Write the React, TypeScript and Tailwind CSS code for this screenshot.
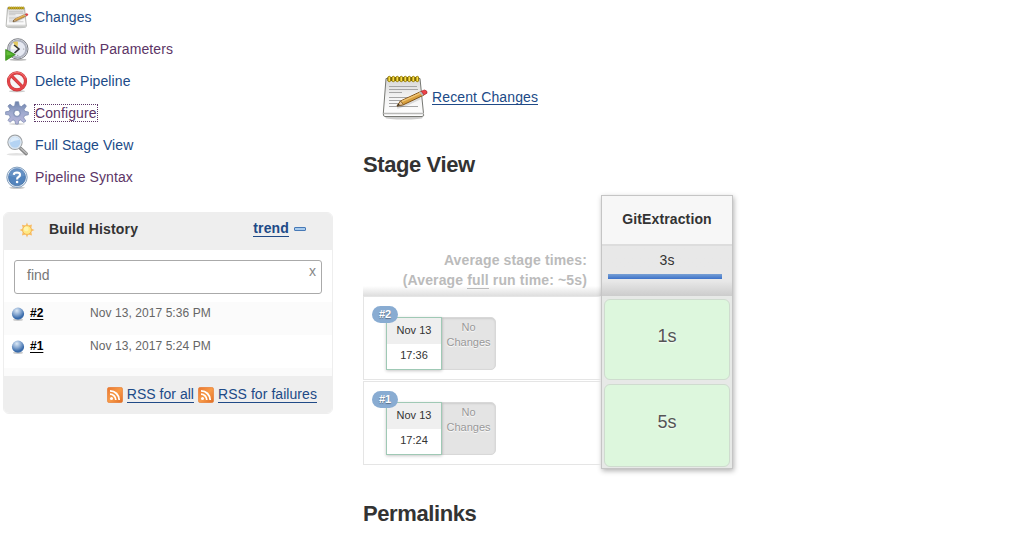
import React from 'react';

type IconProps = { className?: string };

const Notepad = ({ className = '', id }: IconProps & { id: string }) => (
  <svg viewBox="0 0 48 48" className={className}>
    <defs>
      <linearGradient id={id} x1="0" y1="0" x2="0" y2="1">
        <stop offset="0" stopColor="#d6d6d6" />
        <stop offset="0.5" stopColor="#f4f4f4" />
        <stop offset="1" stopColor="#ffffff" />
      </linearGradient>
    </defs>
    <ellipse cx="23" cy="44.8" rx="19" ry="1.8" fill="#000" opacity="0.2" />
    <path d="M5 5.5H39L42.5 40.5Q43.5 43.5 41 43.5H4Q2 43.5 2.3 40.5Z" fill={`url(#${id})`} stroke="#777873" />
    <path d="M3 40.5H43" stroke="#b9b9b7" strokeWidth="1.5" />
    <path d="M8 13.5H36M8 16.5H37M8 19.5H21M8 24.5H29M8 27.5H28M8 30.5H19M8 33.5H37" stroke="#a5a5a5" />
    <path d="M6.5 6H38" stroke="#6c5c12" strokeWidth="4" />
    {[8, 12, 16, 20, 24, 28, 32, 36].map((x) => (
      <rect key={x} x={x - 1} y="3.3" width="2.6" height="5.4" rx="1.3" fill="#f8dc45" stroke="#8f7600" strokeWidth="0.9" />
    ))}
    <path d="M16 34.5Q28 31 39 25" stroke="#000" strokeWidth="3" opacity="0.12" fill="none" />
    <path d="M16 33L19.5 28L40 18.5L43 22L22.5 31.7Z" fill="#d8a03e" stroke="#805219" />
    <path d="M20.5 28.7L40 19.8" stroke="#f0c77a" strokeWidth="1.3" />
    <path d="M16 33L19.5 28L22.5 31.7Z" fill="#e9c89b" stroke="#76501c" strokeWidth="0.7" />
    <path d="M16 33L17.5 30.7L18.8 32Z" fill="#222" />
    <path d="M38 19.3L40.3 18.2L43.3 21.7L41 22.8Z" fill="#bbb" />
    <path d="M40.3 18.2L43.5 17Q46.6 17.5 46 20.2L43 21.9Z" fill="#ee4248" stroke="#a8282c" strokeWidth="0.7" />
  </svg>
);

const BuildIcon = ({ className }: IconProps) => (
  <svg viewBox="0 0 24 24" className={className}>
    <ellipse cx="13" cy="22.8" rx="8.5" ry="1" fill="#bbb" />
    <circle cx="12.8" cy="11.9" r="10.2" fill="#f5f6f8" stroke="#7b7e84" strokeWidth="1" />
    <circle cx="12.8" cy="11.9" r="8.5" fill="#e6e9f2" stroke="#aeb2bf" strokeWidth="2" />
    <path d="M6 12A7 7 0 0 1 12.8 5V12Z" fill="#f8f8ef" />
    <path d="M12.5 12L8 5.2Q10.5 3.9 13 4.7Z" fill="#e3c95f" />
    <path d="M9 8L14 12L9.5 16" stroke="#343434" strokeWidth="1.6" fill="none" />
    <circle cx="18.7" cy="12" r=".6" fill="#888" /><circle cx="12.8" cy="18.3" r=".6" fill="#888" />
    <path d="M.7 12.5L10.3 17.6L.7 23.4Z" fill="#48a724" stroke="#38891c" strokeWidth=".8" />
    <path d="M1.5 14L8 17.4L1.5 18.5Z" fill="#74c947" opacity=".65" />
  </svg>
);

const DeleteIcon = ({ className }: IconProps) => (
  <svg viewBox="0 0 24 24" className={className}>
    <ellipse cx="12" cy="22.3" rx="8" ry="1" fill="#ccc" />
    <circle cx="12" cy="12.3" r="8.5" fill="#f7f7f7" stroke="#c53b3e" strokeWidth="3.2" />
    <path d="M6 6.3L18 18.3" stroke="#c53b3e" strokeWidth="3.3" />
    <circle cx="12" cy="12.3" r="8.5" fill="none" stroke="#e54549" strokeWidth="2.1" />
    <path d="M6 6.3L18 18.3" stroke="#e54549" strokeWidth="2.1" />
    <path d="M3.5 9.3Q6 3.3 12 3.3T20.5 9.3" stroke="#f48583" strokeWidth=".8" fill="none" />
  </svg>
);

const GearIcon = ({ className }: IconProps) => (
  <svg viewBox="0 0 24 24" className={className}>
    <defs>
      <linearGradient id="gear" x2="0" y2="1"><stop stopColor="#6d83ac" /><stop offset=".5" stopColor="#a1abd0" /><stop offset="1" stopColor="#b9b5d9" /></linearGradient>
    </defs>
    <ellipse cx="12" cy="23" rx="8" ry=".8" fill="#ccc" />
    <path fill="url(#gear)" stroke="#7686ae" strokeWidth=".7" fillRule="evenodd" strokeLinejoin="round" d="M10.4 .8H13.6L14.3 4.7L16.4 5.6L19.6 3.1L21.4 5.1L19.1 8.4L19.9 10.3L23.4 11V13.8L19.7 14.5L18.7 16.7L20.9 20L18.7 21.5L15.6 19L13.7 19.7L13.2 23.1H10.7L9.8 19.7L8 18.9L4.9 21.3L3 19.3L5.2 16.2L4.2 14L.6 13.5V10.8L4.2 10.2L5.1 8.3L2.9 5.1L5 3.2L8 5.6L9.7 4.7ZM12 9.3A3 3 0 1 0 12 15.3A3 3 0 1 0 12 9.3Z" />
    <circle cx="12" cy="12.3" r="3.6" fill="none" stroke="#7787b0" opacity=".5" />
  </svg>
);

const SearchIcon = ({ className }: IconProps) => (
  <svg viewBox="0 0 24 24" className={className}>
    <ellipse cx="11.5" cy="21.3" rx="10" ry="1.3" fill="#e2e2e2" />
    <path d="M15.4 15.2L21.2 20.7" stroke="#858585" strokeWidth="3.4" strokeLinecap="round" />
    <path d="M16 15.4L21.3 20.2" stroke="#bcbcbc" strokeWidth="1.4" strokeLinecap="round" />
    <circle cx="10" cy="9.3" r="7.1" fill="#b4d3f3" stroke="#a1a4a6" strokeWidth="1.2" />
    <circle cx="10" cy="9.3" r="6" fill="none" stroke="#e2e8ee" strokeWidth="1.1" />
    <path d="M5.2 9.6Q4.7 4.4 10.2 4Q13.2 4.1 14.4 6.9Q9.7 6.8 5.2 9.6Z" fill="#dcecfb" />
  </svg>
);

const HelpIcon = ({ className }: IconProps) => (
  <svg viewBox="0 0 24 24" className={className}>
    <ellipse cx="12" cy="22.8" rx="8" ry=".9" fill="#bbb" />
    <circle cx="12" cy="12.3" r="10.2" fill="#e7eff8" stroke="#7795b7" strokeWidth=".9" />
    <circle cx="12" cy="12.3" r="8.5" fill="#5384bd" stroke="#416c9d" strokeWidth=".7" />
    <path d="M4 10.8A8 8 0 0 1 20 10.8Q12 13.3 4 10.8Z" fill="#7199c9" opacity=".6" />
    <path d="M8.8 9.8Q9 7.5 12 7.5Q15.2 7.6 15 9.8Q14.9 11.1 13.5 12Q12.1 12.7 12.1 14.4" stroke="white" strokeWidth="2.2" fill="none" />
    <circle cx="12.1" cy="17" r="1.3" fill="white" />
  </svg>
);

const Sun = () => (
  <svg viewBox="0 0 16 16" className="h-4 w-4">
    <path d="M8 .5L9.2 3.5L13 2.5L12.2 6.5L15.5 8L12.3 9.5L13 13.4L9.3 12.4L8 15.5L6.7 12.4L2.9 13.4L3.8 9.5L.5 8L3.9 6.5L2.9 2.7L6.7 3.5Z" fill="#f8bd68" />
    <circle cx="8" cy="8" r="4.4" fill="#ffe985" stroke="#f3b450" strokeWidth=".8" />
    <circle cx="7.3" cy="6.9" r="2.4" fill="#fff7b8" opacity=".8" />
  </svg>
);

const Ball = () => (
  <svg viewBox="0 0 16 16" className="h-4 w-4 shrink-0">
    <defs><radialGradient id="ball" cx=".4" cy=".25" r=".75"><stop stopColor="#dce9f6" /><stop offset=".45" stopColor="#89a9d1" /><stop offset=".85" stopColor="#3568a9" /><stop offset="1" stopColor="#4977b1" /></radialGradient></defs>
    <ellipse cx="8" cy="13.7" rx="5" ry="1.2" fill="#ccc" />
    <circle cx="8" cy="7.7" r="6.1" fill="url(#ball)" />
  </svg>
);

const Rss = () => (
  <svg viewBox="0 0 16 16" className="h-4 w-4 shrink-0">
    <defs><linearGradient id="rss" x2="1" y2="1"><stop stopColor="#e9762f" /><stop offset=".5" stopColor="#f89b48" /><stop offset="1" stopColor="#e06c25" /></linearGradient></defs>
    <rect x=".3" y=".3" width="15.4" height="15.4" rx="2.3" fill="url(#rss)" stroke="#e67a31" strokeWidth=".6" />
    <circle cx="4.5" cy="11.5" r="1.5" fill="white" />
    <path d="M3 7.2A5.8 5.8 0 0 1 8.8 13M3 3.8A9.2 9.2 0 0 1 12.2 13" fill="none" stroke="white" strokeWidth="1.8" />
  </svg>
);

const tasks = [
  { label: 'Changes', icon: <Notepad id="noteSmall" className="h-6 w-6" />, color: 'text-[#204a87]' },
  { label: 'Build with Parameters', icon: <BuildIcon className="h-6 w-6" />, color: 'text-[#5c3566]' },
  { label: 'Delete Pipeline', icon: <DeleteIcon className="h-6 w-6" />, color: 'text-[#204a87]' },
  { label: 'Configure', icon: <GearIcon className="h-6 w-6" />, color: 'text-[#5c3566] outline-1 outline-dotted outline-[#5c3566]' },
  { label: 'Full Stage View', icon: <SearchIcon className="h-6 w-6" />, color: 'text-[#204a87]' },
  { label: 'Pipeline Syntax', icon: <HelpIcon className="h-6 w-6" />, color: 'text-[#5c3566]' },
];

const link = 'border-b border-[#204a87] text-[#204a87]';

const BuildRow = ({ number, date, shade }: { number: string; date: string; shade: string }) => (
  <div className={`flex h-[33px] items-start pl-1.5 pt-[3px] ${shade}`}>
    <div className="flex w-20 items-start gap-1">
      <div className="pt-px"><Ball /></div>
      <a className="text-xs leading-4 font-bold text-black underline underline-offset-2">{number}</a>
    </div>
    <span className="text-xs leading-4 tracking-[.07px] text-[#666]">{date}</span>
  </div>
);

const Run = ({ number, time }: { number: string; time: string }) => (
  <div className="relative h-[84px] border border-r-0 border-[#e5e5e5] pt-5 pl-[22px]">
    <div className="flex text-[11px]">
      <div className="z-10 h-[53px] w-[56px] border border-[#9fc9b5] bg-white text-center text-[#333] shadow-[0_1px_3px_rgba(0,0,0,.22)]">
        <div className="h-[26px] bg-[#efefef] leading-[24px]">Nov 13</div>
        <div className="leading-[23px]">{time}</div>
      </div>
      <div className="-ml-px h-[53px] w-[55px] rounded-r-[5px] border border-[#d8d8d8] bg-[#e4e4e4] pt-[2px] text-center leading-[15px] text-[#999] shadow-[inset_0_1px_2px_rgba(0,0,0,.1)] [text-shadow:0_1px_1px_white]">
        No<br />Changes
      </div>
    </div>
    <span className="absolute top-[9px] left-2 z-20 h-[17px] w-[26px] rounded-full bg-[#89acd2] text-center text-[11px] leading-[17px] font-bold text-white [text-shadow:0_1px_1px_rgba(0,0,0,.35)]">{number}</span>
  </div>
);

const StageCell = ({ time, height }: { time: string; height: string }) => (
  <div className={`flex items-center justify-center rounded-md border border-[#cfdccf] bg-[#ddf7dd] pb-2 text-lg text-[#555] [text-shadow:0_1px_2px_white] ${height}`}>{time}</div>
);

export default function App() {
  return (
    <div className="flex h-[545px] w-[1031px] overflow-hidden bg-white font-['Liberation_Sans',Arial,sans-serif] text-sm text-[#333]">
      <aside className="ml-[3px] w-[330px] shrink-0">
        <nav className="h-[212px] pt-px pl-0.5">
          {tasks.map((task) => (
            <div key={task.label} className="flex h-8 items-center gap-1.5">
              {task.icon}
              <a className={`leading-4 tracking-[.09px] ${task.color}`}>{task.label}</a>
            </div>
          ))}
        </nav>
        <section className="h-[202px] overflow-hidden rounded-md border border-[#eee] bg-white">
          <header className="flex h-[37px] items-center bg-[#eee] pr-[26px] pb-[5px] pl-[15px] font-bold">
            <div className="pt-0.5"><Sun /></div>
            <span className="ml-[14px] tracking-[.15px]">Build History</span>
            <a className={`ml-auto leading-[15px] tracking-[.15px] ${link}`}>trend</a>
            <span className="ml-[5px] h-1 w-3 rounded-[1px] border border-[#4779b6] bg-[#a9cbed]" />
          </header>
          <div className="h-[52px] px-2.5 pt-[10px]">
            <div className="flex h-[34px] justify-between rounded-[3px] border border-[#aaa] px-[5px] pl-3 text-[#777]">
              <span className="leading-7">find</span>
              <span className="text-sm leading-[21px] text-[#888]">x</span>
            </div>
          </div>
          <BuildRow number="#2" date="Nov 13, 2017 5:36 PM" shade="bg-[#fbfbfb]" />
          <BuildRow number="#1" date="Nov 13, 2017 5:24 PM" shade="bg-white" />
          <div className="h-2 bg-[#fbfbfb]" />
          <footer className="flex h-[37px] items-center justify-end gap-1 bg-[#eee] pr-[15px]">
            <Rss /><a className={`leading-[15px] tracking-[.03px] ${link}`}>RSS for all</a>
            <Rss /><a className={`leading-[15px] tracking-[.06px] ${link}`}>RSS for failures</a>
          </footer>
        </section>
      </aside>
      <main className="ml-[30px] w-[370px] shrink-0">
        <div className="flex h-[147px] items-start pt-[73px] pl-[18px]">
          <Notepad id="noteLarge" className="h-12 w-12" />
          <a className={`mt-[17px] ml-[3px] leading-[14px] tracking-[.13px] ${link}`}>Recent Changes</a>
        </div>
        <h2 className="h-[48px] text-[22px] leading-9 font-bold tracking-[-.4px]">Stage View</h2>
        <div className="flex h-[274px] items-start">
          <div className="w-[238px]">
            <div className="flex h-[101px] flex-col items-end justify-end bg-linear-to-b from-white from-90% to-[#dedede] pr-[14px] pb-[6px] font-bold leading-5 tracking-[.14px] text-[#bbb]">
              <span>Average stage times:</span>
              <span>(Average <span className="inline-block border-b border-[#bbb] leading-4">full</span> run time: ~5s)</span>
            </div>
            <Run number="#2" time="17:36" />
            <div className="mt-px"><Run number="#1" time="17:24" /></div>
          </div>
          <div className="h-[274px] w-[132px] border border-[#c5c5c5] bg-[#e7e9e7] text-center shadow-[1px_2px_5px_rgba(0,0,0,.3)]">
            <div className="h-[50px] border-b-2 border-[#ddd] bg-[#f7f7f7] leading-[46px] font-bold tracking-[.13px]">GitExtraction</div>
            <div className="h-[50px] bg-linear-to-b from-[#e8e8e8] from-70% to-[#cccccc] px-1.5 pt-1">
              <div className="leading-5">3s</div>
              <div className="mt-1 mr-1 h-[5px] bg-linear-to-b from-[#78a0d4] to-[#3b71c9]" />
            </div>
            <div className="flex flex-col px-0.5 pt-[3px]">
              <StageCell time="1s" height="h-[81px] mb-1" />
              <StageCell time="5s" height="h-[83px]" />
            </div>
          </div>
        </div>
        <h2 className="mt-[27px] text-[22px] leading-9 font-bold tracking-[-.4px]">Permalinks</h2>
      </main>
    </div>
  );
}
